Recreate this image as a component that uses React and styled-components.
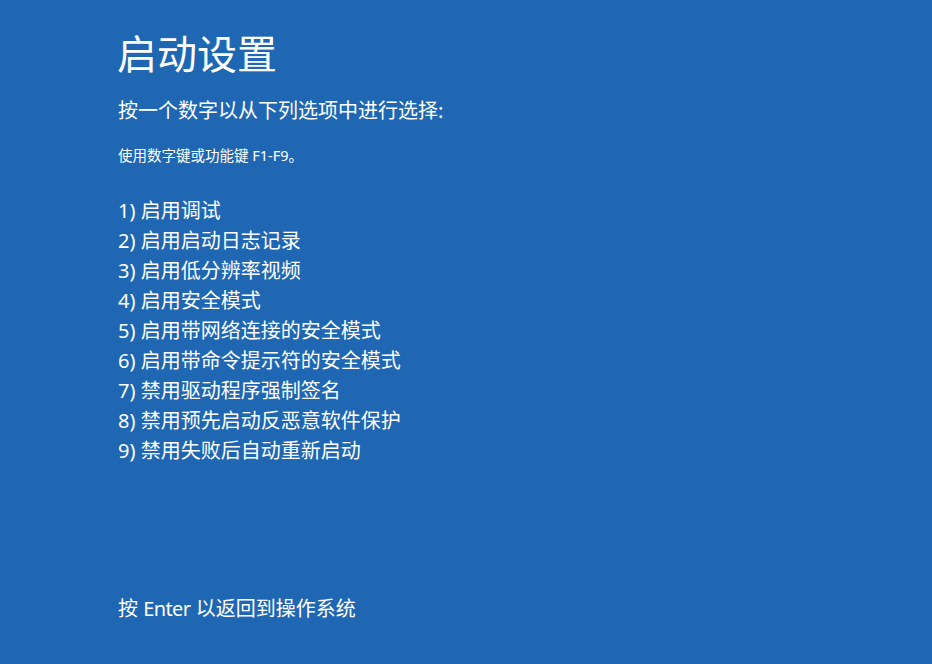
import React from "react";
import styled, { createGlobalStyle } from "styled-components";

const Global = createGlobalStyle`
  html, body { margin: 0; padding: 0; background: #1f67b3; }
  body { font-family: "Noto Sans", "Noto Sans CJK SC", sans-serif; color: #fff; }
`;

const Screen = styled.main`
  box-sizing: border-box;
  width: 932px;
  height: 664px;
  background: #1f67b3;
  padding: 30px 0 40px 118px;
  display: flex;
  flex-direction: column;
  color: #ffffff;
  font-family: "Noto Sans", "Noto Sans CJK SC", sans-serif;
`;

const Title = styled.h1`
  margin: 0;
  font-size: 40px;
  line-height: 48px;
  font-weight: 400;
  margin-left: -1px;
`;

const Prompt = styled.p`
  margin: ${(p) => p.$top}px 0 0;
  font-size: ${(p) => p.$size}px;
  line-height: ${(p) => p.$lh}px;
  font-weight: 400;
`;

const Options = styled.ol`
  list-style: none;
  margin: 31px 0 0;
  padding: 0;
  font-size: 20px;
  line-height: 30px;
`;

const Option = styled.li`
  margin: 0;
`;

const Footer = styled.p`
  margin: auto 0 0;
  font-size: 20px;
  line-height: 30px;
`;

const Key = styled.span`
  letter-spacing: -0.6px;
`;

const items = [
  "启用调试",
  "启用启动日志记录",
  "启用低分辨率视频",
  "启用安全模式",
  "启用带网络连接的安全模式",
  "启用带命令提示符的安全模式",
  "禁用驱动程序强制签名",
  "禁用预先启动反恶意软件保护",
  "禁用失败后自动重新启动",
];

export default function App() {
  return (
    <>
      <Global />
      <Screen>
        <Title>启动设置</Title>
        <Prompt $top={18} $size={20} $lh={30}>按一个数字以从下列选项中进行选择:</Prompt>
        <Prompt $top={19} $size={14.5} $lh={20}>使用数字键或功能键 F1-F9。</Prompt>
        <Options>
          {items.map((t, i) => (
            <Option key={i}>{i + 1}) {t}</Option>
          ))}
        </Options>
        <Footer>按 <Key>Enter</Key> 以返回到操作系统</Footer>
      </Screen>
    </>
  );
}
